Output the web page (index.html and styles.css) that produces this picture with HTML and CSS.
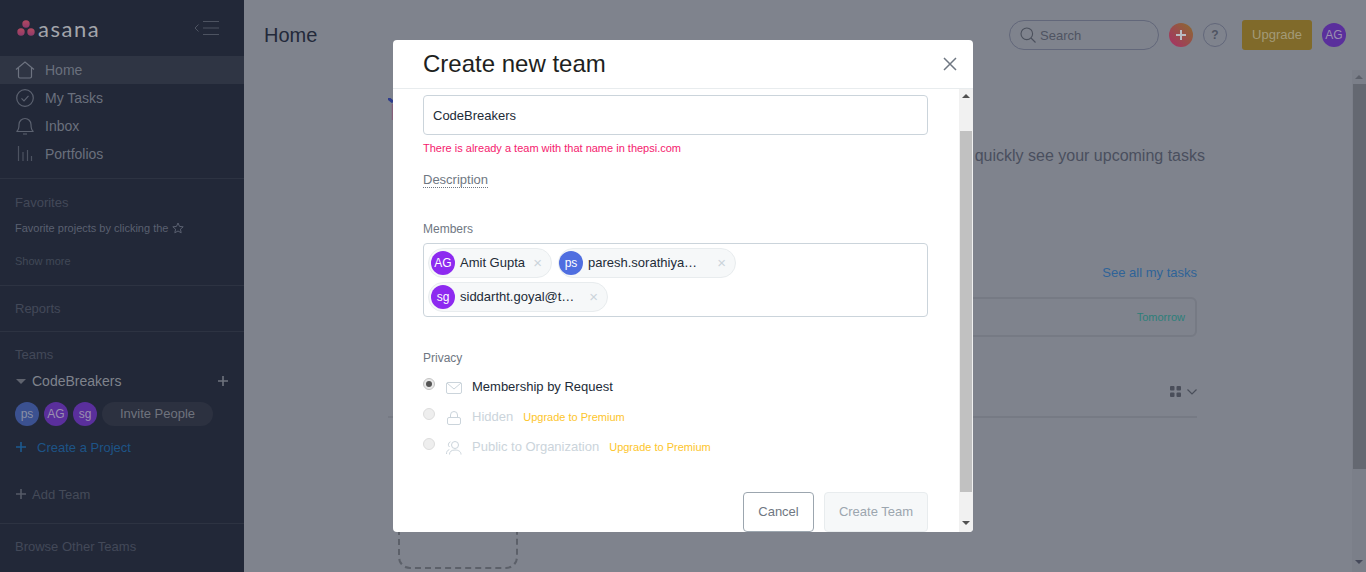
FILE: index.html
```html
<!DOCTYPE html>
<html lang="en">
<head>
  <meta charset="UTF-8">
  <meta name="viewport" content="width=device-width, initial-scale=1.0">
  <title>Create new team</title>
  <link rel="stylesheet" href="styles.css">
</head>
<body>

<div class="app">
  <aside class="sidebar">
    <div class="brand">
      <svg class="brand-mark" width="18" height="16" viewBox="0 0 18 16">
        <defs>
          <linearGradient id="markFill" x1="0" y1="0" x2="0" y2="1">
            <stop offset="0" stop-color="#b3495f"/>
            <stop offset="1" stop-color="#8f3a6a"/>
          </linearGradient>
        </defs>
        <circle cx="9" cy="4" r="3.7" fill="url(#markFill)"/>
        <circle cx="4" cy="12" r="3.7" fill="url(#markFill)"/>
        <circle cx="14" cy="12" r="3.7" fill="url(#markFill)"/>
      </svg>
      <span class="brand-name">asana</span>
      <svg class="collapse" width="26" height="14" viewBox="0 0 26 14" fill="none" stroke="#4d5361">
        <path d="M4.5 3.5 1 7l3.5 3.5"/>
        <path d="M9 .5h16M9 7h16M9 13.500h16"/>
      </svg>
    </div>

    <nav class="nav">
      <a class="nav-item active">
        <svg width="20" height="18" viewBox="0 0 20 18" fill="none" stroke="#6d7380" stroke-width="1.2"><path d="M1 8.500 10 1l9 7.500M3.500 7v8.500a1.500 1.500 0 0 0 1.500 1.500h10a1.500 1.500 0 0 0 1.500-1.500V7"/></svg>
        Home
      </a>
      <a class="nav-item">
        <svg width="20" height="18" viewBox="0 0 20 18" fill="none" stroke="#5c6270" stroke-width="1.2"><circle cx="10" cy="9" r="8.300"/><path d="m6.500 9.300 2.500 2.500 4.500-5"/></svg>
        My Tasks
      </a>
      <a class="nav-item">
        <svg width="20" height="18" viewBox="0 0 20 18" fill="none" stroke="#5c6270" stroke-width="1.200"><path d="M1.500 14.500c2-1 2.500-3 2.500-7a6 6 0 0 1 12 0c0 4 .5 6 2.500 7zM8 17h4"/></svg>
        Inbox
      </a>
      <a class="nav-item">
        <svg width="20" height="18" viewBox="0 0 20 18" fill="none" stroke="#4d5361" stroke-width="1.200"><path d="M3.500 1v15M8 7v9M12.500 5v11M16.500 11v5"/></svg>
        Portfolios
      </a>
    </nav>

    <section class="side-block favorites">
      <h3 class="side-title">Favorites</h3>
      <p class="side-hint">Favorite projects by clicking the
        <svg width="12" height="12" viewBox="0 0 12 12" fill="none" stroke="#5a6070"><path d="m6 1 1.500 3.400 3.700.4-2.800 2.400.8 3.600L6 9l-3.200 1.800.8-3.600L.8 4.800l3.700-.4z"/></svg>
      </p>
      <a class="show-more">Show more</a>
    </section>

    <section class="side-block reports">
      <h3 class="side-title">Reports</h3>
    </section>

    <section class="side-block teams">
      <h3 class="side-title">Teams</h3>
      <div class="team-head">
        <span class="caret"></span>
        <span class="team-name">CodeBreakers</span>
        <svg class="team-add" width="10" height="10" viewBox="0 0 10 10" stroke="#6f737d" stroke-width="1.600"><path d="M5 0v10M0 5h10"/></svg>
      </div>
      <div class="team-members">
        <span class="avatar dim-blue">ps</span>
        <span class="avatar dim-purple">AG</span>
        <span class="avatar dim-purple">sg</span>
        <span class="invite">Invite People</span>
      </div>
      <a class="create-project">
        <svg width="10" height="10" viewBox="0 0 10 10" stroke="#1d5a90" stroke-width="1.600"><path d="M5 0v10M0 5h10"/></svg>
        Create a Project
      </a>
      <a class="add-team">
        <svg width="10" height="10" viewBox="0 0 10 10" stroke="#555a67" stroke-width="1.600"><path d="M5 0v10M0 5h10"/></svg>
        Add Team
      </a>
    </section>

    <section class="side-block browse">
      <h3 class="side-title">Browse Other Teams</h3>
    </section>
  </aside>

  <main class="main">
    <header class="topbar">
      <h1 class="page-title">Home</h1>
      <div class="search">
        <svg width="16" height="16" viewBox="0 0 16 16" fill="none" stroke="#4b505c" stroke-width="1.100"><circle cx="6.800" cy="6.800" r="5.800"/><path d="m11 11 4.500 4.500"/></svg>
        <span>Search</span>
      </div>
      <span class="quick-add">
        <svg width="10" height="10" viewBox="0 0 10 10" stroke="#b9bcc2" stroke-width="2"><path d="M5 0v10M0 5h10"/></svg>
      </span>
      <span class="help">?</span>
      <span class="upgrade">Upgrade</span>
      <span class="avatar dim-purple">AG</span>
    </header>

    <div class="content">
      <div class="home-page">
        <svg class="home-art" width="10" height="24" viewBox="0 0 10 24" fill="none">
          <path d="M0 0 5 4" stroke="#2f3d8c" stroke-width="3"/>
          <path d="M4.500 6v16" stroke="#85607a" stroke-width="1.500"/>
        </svg>
        <p class="intro">Home is the place where you can quickly see your upcoming tasks</p>
        <a class="see-all">See all my tasks</a>
        <div class="task-card"><span class="due">Tomorrow</span></div>
        <div class="projects-head">
          <svg width="11" height="11" viewBox="0 0 11 11" fill="#4a4e5a"><rect width="4.500" height="4.500" rx="1"/><rect x="6.500" width="4.500" height="4.500" rx="1"/><rect y="6.500" width="4.500" height="4.500" rx="1"/><rect x="6.500" y="6.500" width="4.500" height="4.500" rx="1"/></svg>
          <svg width="10" height="6" viewBox="0 0 10 6" fill="none" stroke="#4a4e5a" stroke-width="1.200"><path d="m.5.500 4.500 4.500L9.500.500"/></svg>
        </div>
        <div class="new-project"></div>
      </div>
      <div class="page-scroll">
        <span class="arrow-up dim"></span>
        <span class="page-thumb"></span>
        <span class="arrow-down dim"></span>
      </div>
    </div>
  </main>
</div>

<div class="modal">
  <div class="modal-head">
    <h2>Create new team</h2>
    <svg class="close" width="14" height="14" viewBox="0 0 14 14" stroke="#6f7782" stroke-width="1.500"><path d="m1 1 12 12M13 1 1 13"/></svg>
  </div>

  <div class="modal-body">
    <form class="modal-form">
      <div class="field-input">CodeBreakers</div>
      <p class="error">There is already a team with that name in thepsi.com</p>
      <a class="desc-link">Description</a>

      <label class="field-label members-label">Members</label>
      <div class="members-box">
        <span class="chip chip-amit"><span class="avatar purple">AG</span><span class="chip-name">Amit Gupta</span><span class="chip-x">&times;</span></span>
        <span class="chip chip-paresh"><span class="avatar blue">ps</span><span class="chip-name">paresh.sorathiya…</span><span class="chip-x">&times;</span></span>
        <span class="chip chip-sid"><span class="avatar purple">sg</span><span class="chip-name">siddartht.goyal@t…</span><span class="chip-x">&times;</span></span>
      </div>

      <label class="field-label privacy-label">Privacy</label>
      <div class="privacy-row">
        <span class="radio checked"></span>
        <svg width="16" height="12" viewBox="0 0 16 12" fill="none" stroke="#cbd4db"><rect x=".5" y=".5" width="15" height="11" rx="1.500"/><path d="m1 1 7 6 7-6"/></svg>
        <span class="privacy-name">Membership by Request</span>
      </div>
      <div class="privacy-row off">
        <span class="radio"></span>
        <svg width="16" height="15" viewBox="0 0 16 15" fill="none" stroke="#cbd4db"><rect x="1.500" y="7.500" width="13" height="7" rx="1.500"/><path d="M4.500 7.500V5a3.500 3.500 0 0 1 7 0v2.500"/></svg>
        <span class="privacy-name">Hidden</span>
        <span class="premium">Upgrade to Premium</span>
      </div>
      <div class="privacy-row off">
        <span class="radio"></span>
        <svg width="16" height="14" viewBox="0 0 16 14" fill="none" stroke="#cbd4db"><circle cx="9" cy="4" r="3.500"/><path d="M3.500 13.500c0-3 2-4.500 5.500-4.500s6 1.500 6 4.500M4.500 .8a3 3 0 0 0-1 5.200M.5 13c0-2.500 1-3.800 2.800-4.400"/></svg>
        <span class="privacy-name">Public to Organization</span>
        <span class="premium">Upgrade to Premium</span>
      </div>

      <div class="modal-actions">
        <button type="button" class="btn btn-cancel">Cancel</button>
        <button type="button" class="btn btn-create">Create Team</button>
      </div>
    </form>

    <div class="modal-scroll">
      <span class="arrow-up"></span>
      <span class="modal-thumb"></span>
      <span class="arrow-down"></span>
    </div>
  </div>
</div>

</body>
</html>
```

FILE: styles.css
```css
* {
  box-sizing: border-box;
}

html, body {
  height: 100%;
}

body {
  margin: 0;
  overflow: hidden;
  font-family: "Liberation Sans", Arial, sans-serif;
  background-color: #7f838d;
}

h1, h2, h3, p {
  margin: 0;
  font-weight: normal;
}

.app {
  display: flex;
  height: 572px;
}

/* sidebar */
.sidebar {
  flex: 0 0 244px;
  background-color: #222838;
  color: #434958;
}

.brand {
  display: flex;
  align-items: center;
  height: 56px;
  padding-left: 17px;
}

.brand-name {
  margin-left: 3px;
  font-family: Lato, sans-serif;
  font-size: 22px;
  letter-spacing: 1.500px;
  color: #a3a5ab;
}

.collapse {
  margin-left: auto;
  margin-right: 24px;
}

.nav {
  height: 123px;
  border-bottom: 1px solid #2d3342;
}

.nav-item {
  display: flex;
  align-items: center;
  gap: 10px;
  height: 28px;
  padding-left: 15px;
  font-size: 14px;
  color: #6a707d;
}

.nav-item.active {
  background-color: #2f3544;
}

.side-block {
  border-bottom: 1px solid #2d3342;
}

.side-title {
  font-size: 13px;
  line-height: 16px;
  color: #434958;
}

.favorites {
  height: 107px;
  padding: 16px 15px 0;
}

.side-hint {
  display: flex;
  align-items: center;
  gap: 4px;
  margin-top: 10px;
  font-size: 11px;
  line-height: 14px;
  color: #5a6070;
}

.show-more {
  display: block;
  margin-top: 20px;
  font-size: 11px;
  color: #414857;
}

.reports {
  height: 46px;
  padding: 15px 15px 0;
}

.teams {
  height: 192px;
  padding: 15px 15px 0;
}

.team-head {
  display: flex;
  align-items: center;
  margin-top: 8px;
  height: 20px;
}

.caret {
  width: 0;
  height: 0;
  margin: 0 6px 0 1px;
  border-left: 5px solid transparent;
  border-right: 5px solid transparent;
  border-top: 5px solid #5f636e;
}

.team-name {
  font-size: 14px;
  color: #7f838c;
}

.team-add {
  margin-left: auto;
  margin-right: 1px;
}

.team-members {
  display: flex;
  align-items: center;
  gap: 5px;
  margin-top: 11px;
}

.avatar {
  display: inline-flex;
  flex: none;
  align-items: center;
  justify-content: center;
  width: 24px;
  height: 24px;
  border-radius: 50%;
  font-size: 12px;
  color: #fff;
}

.dim-blue {
  background-color: #3b5190;
  color: #8a90a5;
}

.dim-purple {
  background-color: #5a2f9c;
  color: #9a90b0;
}

.purple {
  background-color: #8d2af0;
}

.blue {
  background-color: #4f6ee0;
}

.invite {
  width: 111px;
  height: 24px;
  border-radius: 12px;
  background-color: #2c3140;
  font-size: 13px;
  line-height: 24px;
  text-align: center;
  color: #6f737d;
}

.create-project {
  display: flex;
  align-items: center;
  gap: 11px;
  margin-top: 13px;
  padding-left: 1px;
  height: 16px;
  font-size: 13px;
  color: #1d5487;
}

.add-team {
  display: flex;
  align-items: center;
  gap: 6px;
  margin-top: 31px;
  padding-left: 1px;
  height: 16px;
  font-size: 13px;
  color: #454b59;
}

.browse {
  padding: 15px 15px 0;
  border-bottom: 0;
}

/* main area, dimmed behind the modal */
.main {
  display: flex;
  flex: 1;
  flex-direction: column;
  min-width: 0;
}

.topbar {
  display: flex;
  flex: 0 0 70px;
  align-items: flex-start;
  padding: 20px 20px 0;
}

.page-title {
  margin-right: auto;
  font-size: 20px;
  line-height: 30px;
  color: #23293a;
}

.search {
  display: flex;
  align-items: center;
  gap: 4px;
  width: 150px;
  height: 30px;
  padding-left: 10px;
  border: 1px solid #62677a;
  border-radius: 15px;
  font-size: 13px;
  color: #4f5462;
}

.quick-add {
  display: flex;
  align-items: center;
  justify-content: center;
  width: 24px;
  height: 24px;
  margin: 3px 0 0 10px;
  border-radius: 50%;
  background: linear-gradient(45deg, #a82f68, #8a6c2e);
}

.help {
  width: 24px;
  height: 24px;
  margin: 3px 15px 0 10px;
  border: 1px solid #62677a;
  border-radius: 50%;
  font-size: 12px;
  font-weight: bold;
  line-height: 22px;
  text-align: center;
  color: #4f5462;
}

.upgrade {
  width: 70px;
  height: 30px;
  margin-right: 10px;
  border-radius: 3px;
  background-color: #806a2a;
  font-size: 13px;
  line-height: 29px;
  text-align: center;
  color: #a39a78;
}

.topbar .avatar {
  margin-top: 3px;
}

.content {
  display: flex;
  flex: 1;
  min-height: 0;
}

.home-page {
  flex: 1;
  min-width: 0;
  padding: 28px 155px 0 144px;
}

.home-art {
  display: block;
  margin-bottom: 24px;
}

.intro {
  width: 817px;
  font-size: 16px;
  line-height: 20px;
  text-align: right;
  white-space: nowrap;
  color: #4a4f5e;
}

.see-all {
  display: block;
  margin-top: 99px;
  font-size: 13px;
  line-height: 16px;
  text-align: right;
  color: #2f6398;
}

.task-card {
  display: flex;
  align-items: center;
  justify-content: flex-end;
  height: 40px;
  margin: 16px 0 0 10px;
  padding-right: 10px;
  border: 2px solid #767a84;
  border-radius: 6px;
}

.due {
  font-size: 11px;
  color: #2d7f7a;
}

.projects-head {
  display: flex;
  align-items: center;
  justify-content: flex-end;
  gap: 6px;
  height: 81px;
  padding: 40px 0 10px;
  border-bottom: 2px solid #767a84;
}

.new-project {
  width: 120px;
  height: 120px;
  margin: 31px 0 0 10px;
  border: 2px dashed #5c6069;
  border-radius: 12px;
}

.page-scroll {
  display: flex;
  flex: 0 0 14px;
  flex-direction: column;
  align-items: center;
  background-color: #7b7f89;
}

.arrow-up.dim {
  border-bottom-color: #5c606a;
}

.arrow-down.dim {
  margin-top: 91px;
  border-top-color: #45495a;
}

.page-thumb {
  width: 13px;
  height: 385px;
  margin: 5px 0 0 1px;
  background-color: #646871;
}

/* modal */
.modal {
  position: absolute;
  top: 40px;
  left: 393px;
  display: flex;
  flex-direction: column;
  width: 580px;
  height: 492px;
  border-radius: 4px;
  background-color: #fff;
  overflow: hidden;
}

.modal-head {
  display: flex;
  flex: 0 0 49px;
  align-items: center;
  justify-content: space-between;
  padding: 0 16px 0 30px;
  border-bottom: 1px solid #e8ecee;
}

.modal-head h2 {
  font-size: 24px;
  color: #1e1f21;
}

.modal-body {
  display: flex;
  flex: 1;
  min-height: 0;
}

.modal-form {
  flex: 1;
  padding: 6px 31px 0 30px;
}

.field-input {
  height: 40px;
  padding-left: 9px;
  border: 1px solid #cbd4db;
  border-radius: 4px;
  font-size: 13px;
  line-height: 39px;
  color: #222b37;
}

.error {
  margin-top: 7px;
  font-size: 11px;
  line-height: 13px;
  color: #f5216e;
}

.desc-link {
  display: inline-block;
  margin-top: 17px;
  font-size: 13px;
  line-height: 15px;
  border-bottom: 1px dotted #6f7782;
  color: #6f7782;
}

.field-label {
  display: block;
  font-size: 12px;
  line-height: 14px;
  color: #6f7782;
}

.members-label {
  margin-top: 34px;
}

.members-box {
  display: flex;
  flex-wrap: wrap;
  gap: 4px 6px;
  height: 74px;
  margin-top: 7px;
  padding: 4px 60px 4px 4px;
  border: 1px solid #cbd4db;
  border-radius: 4px;
}

.chip {
  display: flex;
  align-items: center;
  height: 30px;
  padding-left: 2px;
  border: 1px solid #e8ecee;
  border-radius: 15px;
  background-color: #f6f8f9;
  font-size: 13px;
  color: #222b37;
}

.chip-name {
  margin-left: 5px;
  padding-bottom: 2px;
  white-space: nowrap;
}

.chip-x {
  margin-left: auto;
  margin-right: 9px;
  padding-bottom: 2px;
  font-size: 15px;
  line-height: 15px;
  color: #cbd4db;
}

.chip-amit {
  width: 124px;
}

.chip-paresh {
  width: 178px;
  padding-left: 0;
}

.chip-sid {
  width: 180px;
}

.privacy-label {
  margin-top: 34px;
}

.privacy-row {
  display: flex;
  align-items: center;
  height: 30px;
  font-size: 13px;
  color: #222b37;
}

.privacy-label + .privacy-row {
  margin-top: 6px;
}

.privacy-row svg {
  flex: none;
  margin: 3px 0 0 11px;
}

.radio {
  flex: none;
  position: relative;
  width: 12px;
  height: 12px;
  margin-bottom: 4px;
  border: 1px solid #c4c4c4;
  border-radius: 50%;
  background-color: #e9e9e9;
}

.radio.checked::after {
  content: "";
  position: absolute;
  top: 2px;
  left: 2px;
  width: 6px;
  height: 6px;
  border-radius: 50%;
  background-color: #555;
}

.privacy-row.off .radio {
  background-color: #eee;
  border-color: #ddd;
}

.privacy-name {
  margin-left: 10px;
}

.off .privacy-name {
  color: #cbd4db;
}

.premium {
  margin: 2px 0 0 10px;
  font-size: 11px;
  color: #fdc52b;
}

.modal-actions {
  display: flex;
  justify-content: flex-end;
  gap: 10px;
  margin-top: 31px;
}

.btn {
  height: 40px;
  padding-bottom: 2px;
  border-radius: 4px;
  font-family: inherit;
  font-size: 13px;
}

.btn-cancel {
  width: 71px;
  border: 1px solid #9ca6af;
  background-color: #fff;
  color: #6f7782;
}

.btn-create {
  width: 104px;
  border: 1px solid #e8ecee;
  background-color: #f6f8f9;
  color: #9ca6af;
}

.modal-scroll {
  display: flex;
  flex: 0 0 14px;
  flex-direction: column;
  align-items: center;
  background-color: #f1f1f1;
}

.arrow-up, .arrow-down {
  flex: none;
  width: 0;
  height: 0;
  border-left: 4px solid transparent;
  border-right: 4px solid transparent;
}

.arrow-up {
  margin-top: 5px;
  border-bottom: 4px solid #505050;
}

.arrow-down {
  margin-top: 29px;
  border-top: 4px solid #505050;
}

.modal-thumb {
  width: 12px;
  height: 361px;
  margin-top: 33px;
  background-color: #c1c1c1;
}
```
